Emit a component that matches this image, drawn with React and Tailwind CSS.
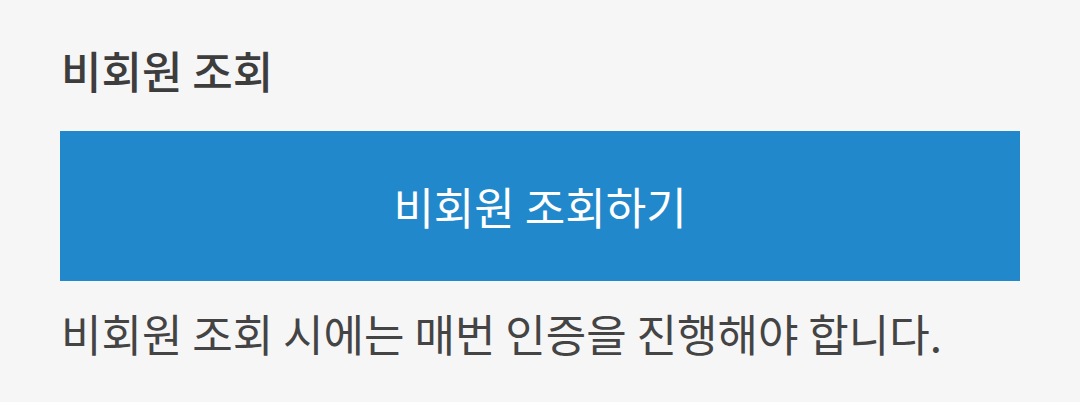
export default function App() {
  return (
    <div className="w-[1080px] h-[402px] bg-[#f6f6f6] px-[60px] pt-[40px]" style={{ fontFamily: '"Noto Sans CJK KR", "Noto Sans", sans-serif' }}>
      <h2 className="text-[44px] leading-[60px] h-[60px] font-medium text-[#3d3d3d] pl-[1px]">비회원 조회</h2>
      <button className="mt-[31px] w-[960px] h-[150px] bg-[#2288cc] text-white text-[44px] font-normal flex items-center justify-center">
        비회원 조회하기
      </button>
      <p className="mt-[22px] text-[44px] leading-[60px] text-[#444444] pl-[1px]">비회원 조회 시에는 매번 인증을 진행해야 합니다.</p>
    </div>
  );
}
